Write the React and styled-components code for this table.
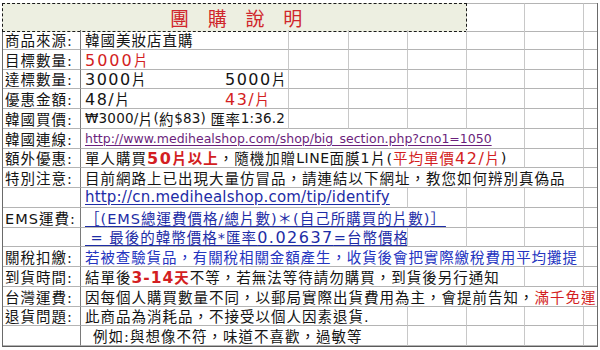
import React from "react";
import styled, { createGlobalStyle } from "styled-components";

const COLS = "78px 208px 60px 59px 59px 58px 59px 13px";

const GlobalStyle = createGlobalStyle`
  * { box-sizing: border-box; }
  html, body {
    margin: 0;
    padding: 0;
    background: #fff;
  }
  body {
    width: 600px;
    height: 350px;
    overflow: hidden;
    font-family: "DejaVu Sans", "Noto Sans CJK TC", sans-serif;
    color: #141414;
  }
`;

const Page = styled.div`
  padding: 3px 0 0 2px;
`;

const Sheet = styled.div`
  width: 596px;
  border-left: 1px solid #6a6a6a;
  border-right: 1px solid #6a6a6a;
  border-bottom: 1px solid #5a5a5a;
`;

const Row = styled.div`
  display: grid;
  grid-template-columns: ${COLS};
  height: ${(p) => p.$h || "19.75px"};
`;

const Cell = styled.div`
  border-bottom: 1px solid #b4b4b4;
  border-right: ${(p) => (p.$last ? "none" : "1px solid #c8c8c8")};
  border-top: ${(p) => (p.$top ? "1px solid #b4b4b4" : "none")};
`;

const Label = styled(Cell)`
  border-right: 1px solid #7a7a7a;
  display: flex;
  align-items: center;
  padding-left: 2px;
  font-size: 14.5px;
  letter-spacing: 1px;
  white-space: nowrap;
  overflow: hidden;
`;

const Value = styled(Cell)`
  grid-column: span ${(p) => p.$span};
  display: flex;
  align-items: center;
  padding-left: ${(p) => p.$indent || 4}px;
  font-size: 14.5px;
  letter-spacing: ${(p) => p.$ls || "1px"};
  white-space: nowrap;
  overflow: hidden;
  color: ${(p) => p.$color || "#141414"};
`;

const TitleBox = styled.div`
  grid-column: span 5;
  margin-left: -1px;
  background: #edefe1;
  border: 1px dashed #1a1a1a;
  display: flex;
  align-items: center;
  justify-content: center;
  padding-left: 22px;
  font-family: "Noto Sans CJK TC", sans-serif;
  font-size: 19px;
  letter-spacing: 18.7px;
  color: #d0262b;
`;

const Pair = styled.span`
  display: inline-block;
  width: ${(p) => p.$w}px;
`;

const Red = styled.span`
  color: #d31e22;
  font-weight: ${(p) => (p.$bold ? 600 : 400)};
`;

const Num = styled.span`
  font-size: ${(p) => p.$size || "15px"};
  letter-spacing: ${(p) => p.$ls || "1.5px"};
`;

const Link = styled.span`
  color: ${(p) => p.$color || "#1d2ca6"};
  text-decoration: underline;
  text-underline-offset: 2px;
  font-size: ${(p) => p.$size || "inherit"};
  letter-spacing: ${(p) => p.$ls || "inherit"};
`;

function SheetRow({ label, span, indent, color, ls, children }) {
  const blanks = 7 - span;
  return (
    <Row>
      <Label>{label}</Label>
      <Value
        $span={span}
        $indent={indent}
        $color={color}
        $ls={ls}
        $last={blanks === 0}
      >
        {children}
      </Value>
      {Array.from({ length: blanks }).map((_, i) => (
        <Cell key={i} $last={i === blanks - 1} />
      ))}
    </Row>
  );
}

export default function App() {
  return (
    <>
      <GlobalStyle />
      <Page>
        <Sheet>
          <Row $h="27px">
            <TitleBox>團購說明</TitleBox>
            <Cell $top />
            <Cell $top />
            <Cell $top $last />
          </Row>

          <SheetRow label="商品來源:" span={1}>
            韓國美妝店直購
          </SheetRow>
          <SheetRow label="目標數量:" span={1}>
            <Red>
              <Num $size="16px" $ls="2px">5000</Num>片
            </Red>
          </SheetRow>
          <SheetRow label="達標數量:" span={1}>
            <Pair $w={140}>
              <Num $size="16px">3000</Num>片
            </Pair>
            <span>
              <Num $size="16px">5000</Num>片
            </span>
          </SheetRow>
          <SheetRow label="優惠金額:" span={1}>
            <Pair $w={140}>
              <Num $size="16px">48/</Num>片
            </Pair>
            <Red>
              <Num $size="16px">43/</Num>片
            </Red>
          </SheetRow>
          <SheetRow label="韓國買價:" span={1} ls="0.6px">
            <Num $size="13.5px" $ls="0.2px">₩3000/</Num>片
            <Num $size="13.5px" $ls="0.2px">(</Num>約
            <Num $size="13.5px" $ls="0.2px">$83)&nbsp;</Num>匯率
            <Num $size="13.5px" $ls="0.2px">1:36.2</Num>
          </SheetRow>
          <SheetRow label="韓國連線:" span={5}>
            <Link $color="#6b1f7c" $size="12.5px" $ls="0px">
              http://www.medihealshop.com/shop/big_section.php?cno1=1050
            </Link>
          </SheetRow>
          <SheetRow label="額外優惠:" span={5}>
            單人購買
            <Red $bold>
              <Num $size="16px">50</Num>片以上
            </Red>
            ，隨機加贈<Num $size="14px" $ls="0.5px">LINE</Num>面膜
            <Num $size="14px">1</Num>片(
            <Red>
              平均單價<Num $size="16px">42/</Num>片
            </Red>
            )
          </SheetRow>
          <SheetRow label="特別注意:" span={6}>
            目前網路上已出現大量仿冒品，請連結以下網址，教您如何辨別真偽品
          </SheetRow>
          <SheetRow label="" span={3}>
            <Link $size="15px" $ls="0.2px">
              http://cn.medihealshop.com/tip/identify
            </Link>
          </SheetRow>
          <SheetRow label="EMS運費:" span={4}>
            <Link>
              ［(<Num $size="14.5px" $ls="1px">EMS</Num>總運費價格/總片數)＊(自己所購買的片數)］
            </Link>
          </SheetRow>
          <SheetRow label="" span={3}>
            <Link>
              &nbsp;= 最後的韓幣價格*匯率<Num $size="16px">0.02637</Num>=台幣價格
            </Link>
          </SheetRow>
          <SheetRow label="關稅扣繳:" span={6} color="#2535bf" ls="0.9px">
            若被查驗貨品，有關稅相關金額產生，收貨後會把實際繳稅費用平均攤提
          </SheetRow>
          <SheetRow label="到貨時間:" span={5}>
            結單後
            <Red $bold>
              <Num $size="15.5px" $ls="1px">3-14</Num>天
            </Red>
            不等，若無法等待請勿購買，到貨後另行通知
          </SheetRow>
          <SheetRow label="台灣運費:" span={7}>
            因每個人購買數量不同，以郵局實際出貨費用為主，會提前告知，
            <Red>滿千免運費</Red>
          </SheetRow>
          <SheetRow label="退貨問題:" span={3}>
            此商品為消耗品，不接受以個人因素退貨.
          </SheetRow>
          <SheetRow label="" span={3} indent={12}>
            例如:與想像不符，味道不喜歡，過敏等
          </SheetRow>
        </Sheet>
      </Page>
    </>
  );
}
